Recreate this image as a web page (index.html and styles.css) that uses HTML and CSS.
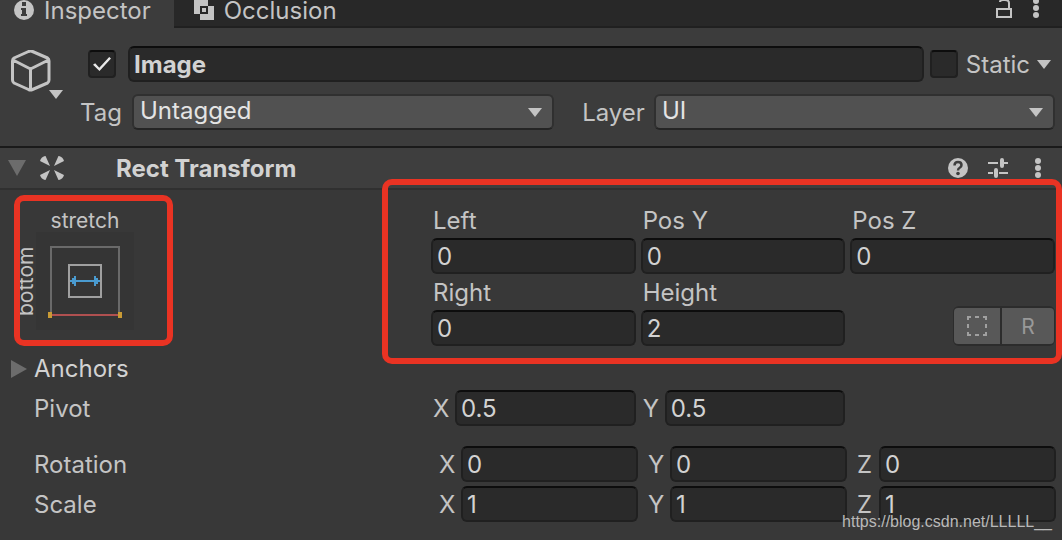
FILE: index.html
```html
<!DOCTYPE html>
<html lang="en">
<head>
<meta charset="utf-8">
<meta name="viewport" content="width=device-width, initial-scale=1">
<title>Inspector</title>
<link rel="stylesheet" href="styles.css">
</head>
<body>
<main class="inspector">
  <nav class="tabs">
    <button class="tab tab-active" type="button">
      <svg class="tab-icon" width="20" height="20" viewBox="0 0 20 20"><circle cx="10" cy="10" r="10" fill="#c4c4c4"/><path d="M8 2h4v4H8zM7 8h5v6h1v2H7v-2h1v-4H7z" fill="#3c3c3c"/></svg>
      Inspector
    </button>
    <button class="tab tab-next" type="button">
      <svg class="tab-icon" width="20" height="20" viewBox="0 0 20 20"><path d="M0 0h14v6h6v14H6v-6H0z" fill="#c4c4c4"/><path d="M7 7h6v6H7z" fill="none" stroke="#282828" stroke-width="2"/></svg>
      Occlusion
    </button>
    <div class="tab-tools">
      <button class="icon-button" type="button" aria-label="Lock"><svg width="16" height="20" viewBox="0 0 16 20"><path d="M1 9h14v8H1zM13 9V3Q13 0 9 0H7Q4 0 4 2" fill="none" stroke="#c4c4c4" stroke-width="2"/></svg></button>
      <button class="icon-button" type="button" aria-label="Tab menu"><svg width="6" height="20" viewBox="0 0 6 20"><g fill="#c4c4c4"><circle cx="3" cy="1" r="3"/><circle cx="3" cy="8" r="3"/><circle cx="3" cy="15" r="3"/></g></svg></button>
    </div>
  </nav>

  <header class="object">
    <button class="object-icon" type="button" aria-label="Object icon">
      <svg width="54" height="52" viewBox="0 0 54 52"><path d="M17.500 1.500Q19.500 .7 21.500 1.500L36.500 8Q38 9 38 11V30Q38 32 36.500 33L21.500 39.500Q19.500 40.300 17.500 39.500L3 33Q1.500 32 1.500 30V11Q1.500 9 3 8ZM2 10L19.500 19L37.500 10M19.500 19V39" fill="none" stroke="#c4c4c4" stroke-width="3" stroke-linejoin="round"/><path d="M38 40h14l-7 9z" fill="#c4c4c4"/></svg>
    </button>
    <div class="object-rows">
      <div class="name-row">
        <input class="check" type="checkbox" aria-label="Active" checked>
        <input class="field field-name" type="text" aria-label="Name" value="Image">
        <input class="check" type="checkbox" id="static">
        <label class="static-label" for="static">Static</label>
        <button class="icon-button" type="button" aria-label="Static options"><svg width="14" height="9" viewBox="0 0 14 9"><path d="M0 0h14L7 9z" fill="#c4c4c4"/></svg></button>
      </div>
      <div class="tag-row">
        <label for="tag">Tag</label>
        <div class="select-box select-tag">
          <select class="select" id="tag"><option>Untagged</option></select>
          <svg class="select-arrow" width="14" height="9" viewBox="0 0 14 9"><path d="M0 0h14L7 9z" fill="#c4c4c4"/></svg>
        </div>
        <label class="layer-label" for="layer">Layer</label>
        <div class="select-box select-layer">
          <select class="select" id="layer"><option>UI</option></select>
          <svg class="select-arrow" width="14" height="9" viewBox="0 0 14 9"><path d="M0 0h14L7 9z" fill="#c4c4c4"/></svg>
        </div>
      </div>
    </div>
  </header>

  <section class="component">
    <div class="component-bar">
      <button class="icon-button" type="button" aria-label="Collapse"><svg width="18" height="16" viewBox="0 0 18 16"><path d="M0 0h18L9 16z" fill="#6c6c6c"/></svg></button>
      <svg class="component-icon" width="24" height="24" viewBox="0 0 24 24"><g fill="#c4c4c4"><path d="M10 10L0 5Q1 1 5 0Q6 0 6 1Z"/><path d="M14 10L24 5Q23 1 19 0Q18 0 18 1Z"/><path d="M10 14L0 19Q1 23 5 24Q6 24 6 23Z"/><path d="M14 14L24 19Q23 23 19 24Q18 24 18 23Z"/></g></svg>
      <h2 class="component-title">Rect Transform</h2>
      <div class="component-tools">
        <button class="icon-button" type="button" aria-label="Help"><svg width="20" height="20" viewBox="0 0 20 20"><circle cx="10" cy="10" r="10" fill="#c4c4c4"/><path d="M6.500 7.500Q6.500 4 10 4T13.500 7Q13.500 8.500 12 9.500Q10 10.500 10 12.500" fill="none" stroke="#3e3e3e" stroke-width="2.500"/><circle cx="10" cy="15.500" r="1.800" fill="#3e3e3e"/></svg></button>
        <button class="icon-button" type="button" aria-label="Presets"><svg width="20" height="20" viewBox="0 0 20 20"><path d="M0 5h10M16 5h4M0 15h5M11 15h9" stroke="#c4c4c4" stroke-width="2"/><path d="M14 2v6M8 12v6" stroke="#c4c4c4" stroke-width="4" stroke-linecap="round"/></svg></button>
        <button class="icon-button" type="button" aria-label="Component menu"><svg width="6" height="20" viewBox="0 0 6 20"><g fill="#c4c4c4"><circle cx="3" cy="3" r="3"/><circle cx="3" cy="10" r="3"/><circle cx="3" cy="17" r="3"/></g></svg></button>
      </div>
    </div>

    <div class="rect">
      <div class="anchor">
        <span class="anchor-top">stretch</span>
        <span class="anchor-side">bottom</span>
        <button class="anchor-preset" type="button" aria-label="Anchor presets">
          <svg width="98" height="98" viewBox="0 0 98 98"><path d="M15 83V15H83V83" fill="none" stroke="#6a6a6a" stroke-width="2"/><path d="M33 33H65V65H33Z" fill="none" stroke="#a0a0a0" stroke-width="2"/><path d="M14 83H84" stroke="#b05050" stroke-width="2"/><path d="M12 80h4v6h-4zM82 80h4v6h-4z" fill="#c89a35"/><path d="M34 48h2v-2h2v-2h2v4h18v-4h2v2h2v2h2v2h-2v2h-2v2h-2v-4H40v4h-2v-2h-2v-2h-2z" fill="#4a9bd0"/></svg>
        </button>
      </div>
      <div class="position">
        <label class="cell" for="left">Left</label>
        <label class="cell" for="posy">Pos Y</label>
        <label class="cell" for="posz">Pos Z</label>
        <input class="field" id="left" type="text" value="0">
        <input class="field" id="posy" type="text" value="0">
        <input class="field" id="posz" type="text" value="0">
        <label class="cell" for="right">Right</label>
        <label class="cell cell-wide" for="height">Height</label>
        <input class="field" id="right" type="text" value="0">
        <input class="field" id="height" type="text" value="2">
        <div class="modes">
          <button class="mode" type="button" aria-label="Blueprint mode"><svg width="20" height="20" viewBox="0 0 20 20"><path d="M0 4V0h4v2H2v2zM8 0h4v2H8zM16 0h4v4h-2V2h-2zM0 8h2v4H0zM18 8h2v4h-2zM0 16h2v2h2v2H0zM8 18h4v2H8zM18 16h2v4h-4v-2h2z" fill="#a0a0a0"/></svg></button>
          <button class="mode mode-raw" type="button">R</button>
        </div>
      </div>
      <div class="mark mark-anchor"></div>
      <div class="mark mark-position"></div>
    </div>

    <div class="row">
      <button class="row-name foldout" type="button"><svg width="16" height="18" viewBox="0 0 16 18"><path d="M0 0v18l16-9z" fill="#6c6c6c"/></svg>Anchors</button>
    </div>
    <div class="row row-pivot">
      <span class="row-name">Pivot</span>
      <div class="values">
        <label class="axis">X<input class="field" type="text" value="0.5"></label>
        <label class="axis">Y<input class="field" type="text" value="0.5"></label>
      </div>
    </div>
    <div class="row">
      <span class="row-name">Rotation</span>
      <div class="values values-vector">
        <label class="axis">X<input class="field" type="text" value="0"></label>
        <label class="axis">Y<input class="field" type="text" value="0"></label>
        <label class="axis">Z<input class="field" type="text" value="0"></label>
      </div>
    </div>
    <div class="row">
      <span class="row-name">Scale</span>
      <div class="values values-vector">
        <label class="axis">X<input class="field" type="text" value="1"></label>
        <label class="axis">Y<input class="field" type="text" value="1"></label>
        <label class="axis">Z<input class="field" type="text" value="1"></label>
      </div>
    </div>
    <a class="source" href="https://blog.csdn.net/LLLLL__">https://blog.csdn.net/LLLLL__</a>
  </section>
</main>
</body>
</html>
```
FILE: styles.css
```css
* {
  box-sizing: border-box;
}

body {
  margin: 0;
  background: #3c3c3c;
  color: #c4c4c4;
  font: 24px/38px Inter, "Liberation Sans", sans-serif;
}

button,
input,
select {
  margin: 0;
  padding: 0;
  border: 0;
  background: none;
  color: inherit;
  font: inherit;
}

svg {
  display: block;
  flex: none;
}

.icon-button {
  display: flex;
}

/* Tabs */
.tabs {
  display: flex;
  height: 28px;
  background: #282828;
}

.tab {
  display: flex;
  align-items: flex-start;
  gap: 10px;
  padding: 0 23px 6px 14px;
  line-height: 22px;
}

.tab-active {
  background: #3c3c3c;
}

.tab-next {
  flex: 1;
  padding-left: 20px;
  padding-bottom: 4px;
  border-bottom: 2px solid #202020;
}

.tab-tools {
  display: flex;
  gap: 21px;
  padding-right: 23px;
  border-bottom: 2px solid #202020;
}

/* Object header */
.object {
  display: flex;
  padding: 18px 7px 16px 11px;
  border-bottom: 2px solid #1a1a1a;
}

.object-icon {
  align-self: flex-start;
  padding-top: 4px;
  width: 69px;
}

.object-rows {
  flex: 1;
  display: grid;
  gap: 12px;
  min-width: 0;
}

.name-row,
.tag-row {
  display: flex;
  align-items: center;
  height: 36px;
}

.name-row label,
.tag-row label {
  padding-top: 2px;
}

.name-row {
  gap: 6px;
  padding: 0 4px 0 8px;
}

.field {
  width: 100%;
  min-width: 0;
  height: 36px;
  padding: 2px 4px 0;
  border: 2px solid #202020;
  border-top-color: #0d0d0d;
  border-radius: 6px;
  background: #2a2a2a;
  color: #d2d2d2;
}

.field-name {
  flex: 1;
  margin-left: 6px;
  font-weight: 700;
}

.check {
  appearance: none;
  flex: none;
  display: grid;
  place-items: center;
  width: 28px;
  height: 28px;
  border: 2px solid #202020;
  border-top-color: #0d0d0d;
  border-radius: 4px;
  background: #2a2a2a;
}

.check:checked::before {
  content: "";
  width: 18px;
  height: 14px;
  background: #e8e8e8;
  clip-path: polygon(0 55%, 12% 45%, 35% 76%, 90% 0, 100% 10%, 36% 100%);
}

.static-label {
  margin: 0 1px 0 2px;
}

.select-box {
  position: relative;
  min-width: 0;
}

.select-tag {
  flex: 421 1 0;
  margin-left: 10px;
}

.select-layer {
  flex: 400 1 0;
  margin-left: 9px;
}

.layer-label {
  margin-left: 28px;
}

.select {
  appearance: none;
  display: block;
  width: 100%;
  height: 36px;
  padding: 0 32px 2px 6px;
  border: 2px solid #303030;
  border-bottom-color: #242424;
  border-radius: 6px;
  background: #515151;
  color: #e4e4e4;
  line-height: 30px;
}

.select-arrow {
  position: absolute;
  top: 14px;
  right: 12px;
  pointer-events: none;
}

/* Component */
.component {
  position: relative;
  padding-bottom: 14px;
  border-bottom: 2px solid #1a1a1a;
  background: #383838;
}

.component-bar {
  display: flex;
  align-items: center;
  height: 42px;
  padding: 0 21px 0 8px;
  border-bottom: 2px solid #303030;
  background: #3e3e3e;
}

.component-icon {
  margin-left: 14px;
}

.component-title {
  flex: 1;
  margin: 0 0 0 52px;
  padding-top: 2px;
  color: #d2d2d2;
  font-size: 24px;
  font-weight: 700;
}

.component-tools {
  display: flex;
  gap: 20px;
}

.component-tools .icon-button:last-child {
  margin-left: 7px;
}

.rect {
  position: relative;
  display: flex;
  padding: 12px 7px 4px 15px;
}

.anchor {
  flex: none;
  display: grid;
  grid-template: 30px 98px / 21px 98px;
  width: 416px;
  font-size: 21px;
}

.anchor-top {
  grid-column: 2;
  text-align: center;
}

.anchor-side {
  writing-mode: vertical-rl;
  rotate: 180deg;
  line-height: 22px;
  text-align: center;
}

.anchor-preset {
  background: #353535;
}

.position {
  flex: 1;
  display: grid;
  grid-template: repeat(4, 36px) / repeat(3, minmax(0, 1fr));
  column-gap: 5px;
}

.cell {
  padding-left: 2px;
}

.cell-wide {
  grid-column: span 2;
}

.modes {
  display: flex;
  justify-self: end;
  gap: 2px;
  width: 102px;
  height: 40px;
  margin-top: -4px;
  padding: 2px 1px;
  border-radius: 6px;
  background: #2c2c2c;
}

.mode {
  flex: 46;
  display: grid;
  place-items: center;
  border-radius: 4px 0 0 4px;
  background: #585858;
}

.mode-raw {
  flex: 52;
  padding-top: 2px;
  border-radius: 0 4px 4px 0;
  color: #999;
  font-size: 21px;
  line-height: 34px;
}

.mark {
  position: absolute;
  border: 6px solid #e93323;
  border-radius: 10px;
  pointer-events: none;
}

.mark-anchor {
  top: 5px;
  left: 14px;
  width: 159px;
  height: 151px;
}

.mark-position {
  top: -11px;
  right: 0;
  left: 382px;
  height: 185px;
}

.row {
  display: flex;
  height: 36px;
  margin-bottom: 4px;
  padding: 0 7px 0 11px;
}

.row-pivot {
  margin-bottom: 20px;
}

.row-name {
  flex: none;
  width: 420px;
  padding-left: 23px;
}

.foldout {
  display: flex;
  align-items: center;
  gap: 7px;
  height: 38px;
  padding-left: 0;
  color: #d2d2d2;
}

.values {
  flex: 1;
  display: grid;
  grid-template-columns: repeat(3, minmax(0, 1fr));
  gap: 5px;
}

.values-vector {
  gap: 8px;
  margin: 0 -1px 0 6px;
}

.axis {
  display: grid;
  grid-template-columns: 22px minmax(0, 1fr);
  padding-left: 2px;
}

.source {
  position: absolute;
  right: 10px;
  bottom: 6px;
  color: #b8b8b8;
  font: 16px/24px "Liberation Sans", sans-serif;
  text-decoration: none;
}
```
